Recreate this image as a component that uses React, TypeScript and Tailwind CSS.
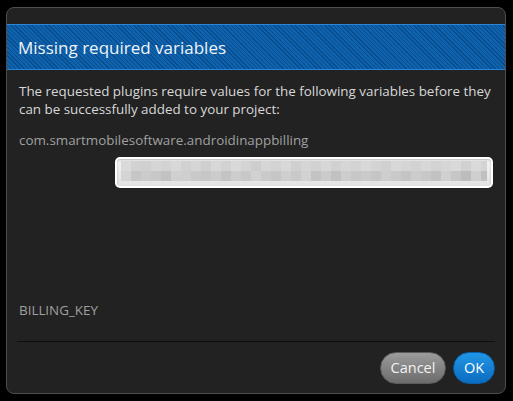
const tones = [
  ["#dadada", "#d4d4d4"],
  ["#d2d2d2", "#c6c6c6"],
  ["#d0d0d0", "#cbcbcb"],
  ["#d6d6d6", "#c8c8c8"],
  ["#d3d3d3", "#c2c2c2"],
  ["#d8d8d8", "#d0d0d0"],
  ["#d1d1d1", "#cfcfcf"],
  ["#d5d5d5", "#c9c9c9"],
  ["#cfcfcf", "#c7c7c7"],
  ["#d7d7d7", "#cccccc"],
  ["#d2d2d2", "#c4c4c4"],
  ["#d9d9d9", "#cdcdcd"],
  ["#d4d4d4", "#c8c8c8"],
  ["#cecece", "#d1d1d1"],
  ["#d6d6d6", "#cacaca"],
  ["#d3d3d3", "#c6c6c6"],
  ["#d8d8d8", "#cfcfcf"],
  ["#d0d0d0", "#c9c9c9"],
  ["#d5d5d5", "#d2d2d2"],
  ["#d2d2d2", "#c3c3c3"],
  ["#d7d7d7", "#cbcbcb"],
  ["#d1d1d1", "#c1c1c1"],
  ["#d6d6d6", "#cdcdcd"],
  ["#d3d3d3", "#c7c7c7"],
  ["#d9d9d9", "#cacaca"],
  ["#d4d4d4", "#c5c5c5"],
  ["#d0d0d0", "#cecece"],
  ["#d8d8d8", "#c9c9c9"],
  ["#d5d5d5", "#c4c4c4"],
  ["#d2d2d2", "#cccccc"],
  ["#d7d7d7", "#c8c8c8"],
  ["#d3d3d3", "#c2c2c2"],
  ["#d6d6d6", "#d0d0d0"],
  ["#d9d9d9", "#c6c6c6"],
  ["#d1d1d1", "#bdbdbd"],
  ["#dadada", "#cfcfcf"],
  ["#d4d4d4", "#c0c0c0"],
];

const BlurredValue = () => (
  <div className="flex h-[31px] w-[378px] flex-col rounded-[5px] border-2 border-white bg-gradient-to-b from-[#f4f4f4] to-[#e2e2e2] px-[4px] pt-[2px] shadow-[inset_0_1px_2px_rgba(0,0,0,0.25)]">
    <div className="flex h-[20px] overflow-hidden">
      {tones.map((t, i) => (
        <div key={i} className="flex w-[10px] shrink-0 flex-col">
          <div className="h-[10px]" style={{ background: t[0] }} />
          <div className="h-[10px]" style={{ background: t[1] }} />
        </div>
      ))}
    </div>
  </div>
);

export default function App() {
  return (
    <div className="h-[401px] w-[513px] bg-black pl-[6px] pt-[7px] font-['Open_Sans',sans-serif]">
      <div className="flex h-[387px] w-[500px] flex-col overflow-hidden rounded-[8px] border border-[#4d4d4d] bg-[#222222]">
        <div className="mt-[16px] flex h-[46px] items-center border-y border-[#2a86d8] bg-[repeating-linear-gradient(45deg,#0a4d8c_0px,#0a4d8c_1px,#0f63ae_1px,#0f63ae_3px)] pl-[11px]">
          <h1 className="text-[17px] leading-none text-[#eef4fa]">
            Missing required variables
          </h1>
        </div>

        <div className="flex flex-1 flex-col px-[12px] pt-[12px]">
          <p className="text-[13.4px] leading-[18px] text-[#d8d8d8]">
            The requested plugins require values for the following variables before they
            can be successfully added to your project:
          </p>
          <p className="mt-[13px] text-[13.4px] leading-[18px] text-[#a0a0a0]">
            com.smartmobilesoftware.androidinappbilling
          </p>
          <div className="mt-[8px] flex justify-end">
            <BlurredValue />
          </div>
          <div className="flex-1" />
          <p className="mb-[22px] text-[13.4px] leading-[18px] text-[#a0a0a0]">BILLING_KEY</p>
          <div className="-mx-[2px] h-px bg-[#0e0e0e]" />
          <div className="-mr-[2px] flex justify-end gap-[7px] pb-[9px] pt-[10px]">
            <button className="h-[32px] w-[66px] rounded-full border border-[#5a5a5a] bg-gradient-to-b from-[#9c9c9c] to-[#6c6c6c] text-[14.5px] text-[#f2f2f2]">
              Cancel
            </button>
            <button className="h-[32px] w-[42px] rounded-full border border-[#0a5fa8] bg-gradient-to-b from-[#2196e6] to-[#0b6cbf] text-[14.5px] text-white">
              OK
            </button>
          </div>
        </div>
      </div>
    </div>
  );
}
